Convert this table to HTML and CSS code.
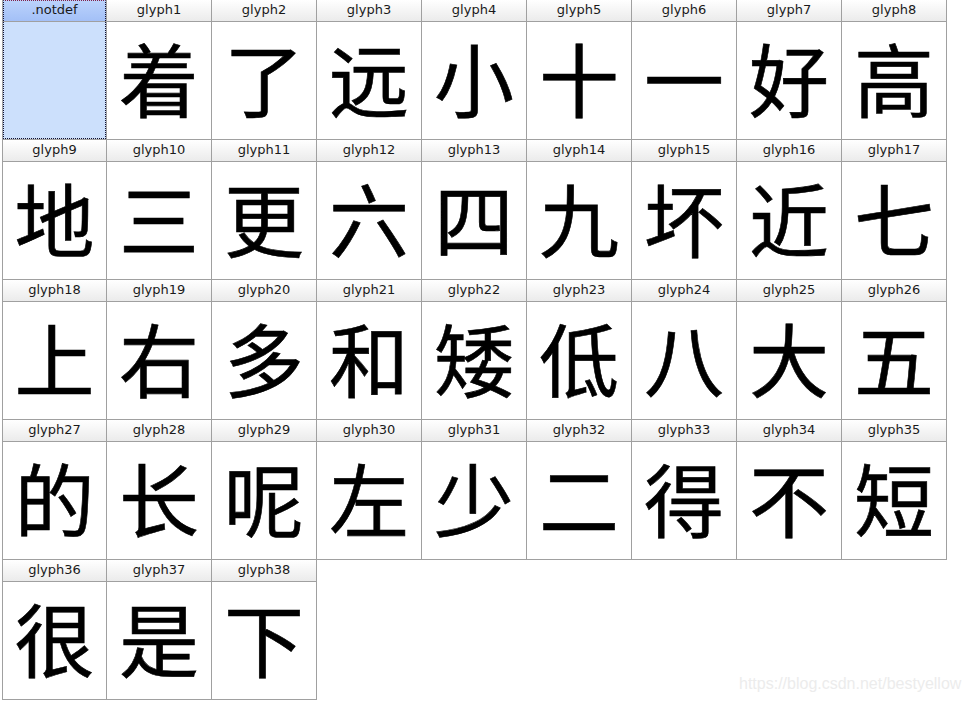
FILE: index.html
```html
<!DOCTYPE html>
<html lang="zh">
<head>
<meta charset="UTF-8" />
<title>Glyph Table</title>
<link rel="stylesheet" href="styles.css">
</head>
<body>

<div class="grid">
  <div class="tile selected"><div class="name">.notdef</div><div class="glyph"></div></div>
  <div class="tile"><div class="name">glyph1</div><div class="glyph">着</div></div>
  <div class="tile"><div class="name">glyph2</div><div class="glyph">了</div></div>
  <div class="tile"><div class="name">glyph3</div><div class="glyph">远</div></div>
  <div class="tile"><div class="name">glyph4</div><div class="glyph">小</div></div>
  <div class="tile"><div class="name">glyph5</div><div class="glyph">十</div></div>
  <div class="tile"><div class="name">glyph6</div><div class="glyph">一</div></div>
  <div class="tile"><div class="name">glyph7</div><div class="glyph">好</div></div>
  <div class="tile"><div class="name">glyph8</div><div class="glyph">高</div></div>

  <div class="tile"><div class="name">glyph9</div><div class="glyph">地</div></div>
  <div class="tile"><div class="name">glyph10</div><div class="glyph">三</div></div>
  <div class="tile"><div class="name">glyph11</div><div class="glyph">更</div></div>
  <div class="tile"><div class="name">glyph12</div><div class="glyph">六</div></div>
  <div class="tile"><div class="name">glyph13</div><div class="glyph">四</div></div>
  <div class="tile"><div class="name">glyph14</div><div class="glyph">九</div></div>
  <div class="tile"><div class="name">glyph15</div><div class="glyph">坏</div></div>
  <div class="tile"><div class="name">glyph16</div><div class="glyph">近</div></div>
  <div class="tile"><div class="name">glyph17</div><div class="glyph">七</div></div>

  <div class="tile"><div class="name">glyph18</div><div class="glyph">上</div></div>
  <div class="tile"><div class="name">glyph19</div><div class="glyph">右</div></div>
  <div class="tile"><div class="name">glyph20</div><div class="glyph">多</div></div>
  <div class="tile"><div class="name">glyph21</div><div class="glyph">和</div></div>
  <div class="tile"><div class="name">glyph22</div><div class="glyph">矮</div></div>
  <div class="tile"><div class="name">glyph23</div><div class="glyph">低</div></div>
  <div class="tile"><div class="name">glyph24</div><div class="glyph">八</div></div>
  <div class="tile"><div class="name">glyph25</div><div class="glyph">大</div></div>
  <div class="tile"><div class="name">glyph26</div><div class="glyph">五</div></div>

  <div class="tile"><div class="name">glyph27</div><div class="glyph">的</div></div>
  <div class="tile"><div class="name">glyph28</div><div class="glyph">长</div></div>
  <div class="tile"><div class="name">glyph29</div><div class="glyph">呢</div></div>
  <div class="tile"><div class="name">glyph30</div><div class="glyph">左</div></div>
  <div class="tile"><div class="name">glyph31</div><div class="glyph">少</div></div>
  <div class="tile"><div class="name">glyph32</div><div class="glyph">二</div></div>
  <div class="tile"><div class="name">glyph33</div><div class="glyph">得</div></div>
  <div class="tile"><div class="name">glyph34</div><div class="glyph">不</div></div>
  <div class="tile"><div class="name">glyph35</div><div class="glyph">短</div></div>

  <div class="tile"><div class="name">glyph36</div><div class="glyph">很</div></div>
  <div class="tile"><div class="name">glyph37</div><div class="glyph">是</div></div>
  <div class="tile"><div class="name">glyph38</div><div class="glyph">下</div></div>
</div>

<div class="watermark">https://blog.csdn.net/bestyellow</div>

</body>
</html>
```

FILE: styles.css
```css
body { margin: 0; background: #fff; width: 968px; height: 703px; overflow: hidden; position: relative; }
.grid { display: grid; grid-template-columns: 104px repeat(8, 105px); margin-left: 2px; border-left: 1px solid #a0a0a0; width: 944px; }
.tile { position: relative; border-right: 1px solid #a0a0a0; border-bottom: 1px solid #a0a0a0; }
.name { height: 21px; line-height: 20px; text-align: center; font-family: "DejaVu Sans", sans-serif; font-size: 13px; color: #1a1a1a; background: linear-gradient(#ffffff, #ebebeb); border-bottom: 1px solid #a0a0a0; }
.glyph { height: 117px; line-height: 108px; text-align: center; font-family: "Noto Sans CJK SC", sans-serif; font-size: 80px; color: #000; -webkit-text-stroke: 0.6px #000; }
.selected .name { background: linear-gradient(#bcd3fc, #a3c0f7); }
.selected .glyph { background: #cce0fc; }
.selected::after { content: ""; position: absolute; left: 0; top: 0; right: 0; bottom: 0; border: 1px dotted #101030; border-top-color: #802048; }
.watermark { position: absolute; left: 739px; top: 675px; font-family: "Liberation Sans", sans-serif; font-size: 16px; color: #ececec; }
```
